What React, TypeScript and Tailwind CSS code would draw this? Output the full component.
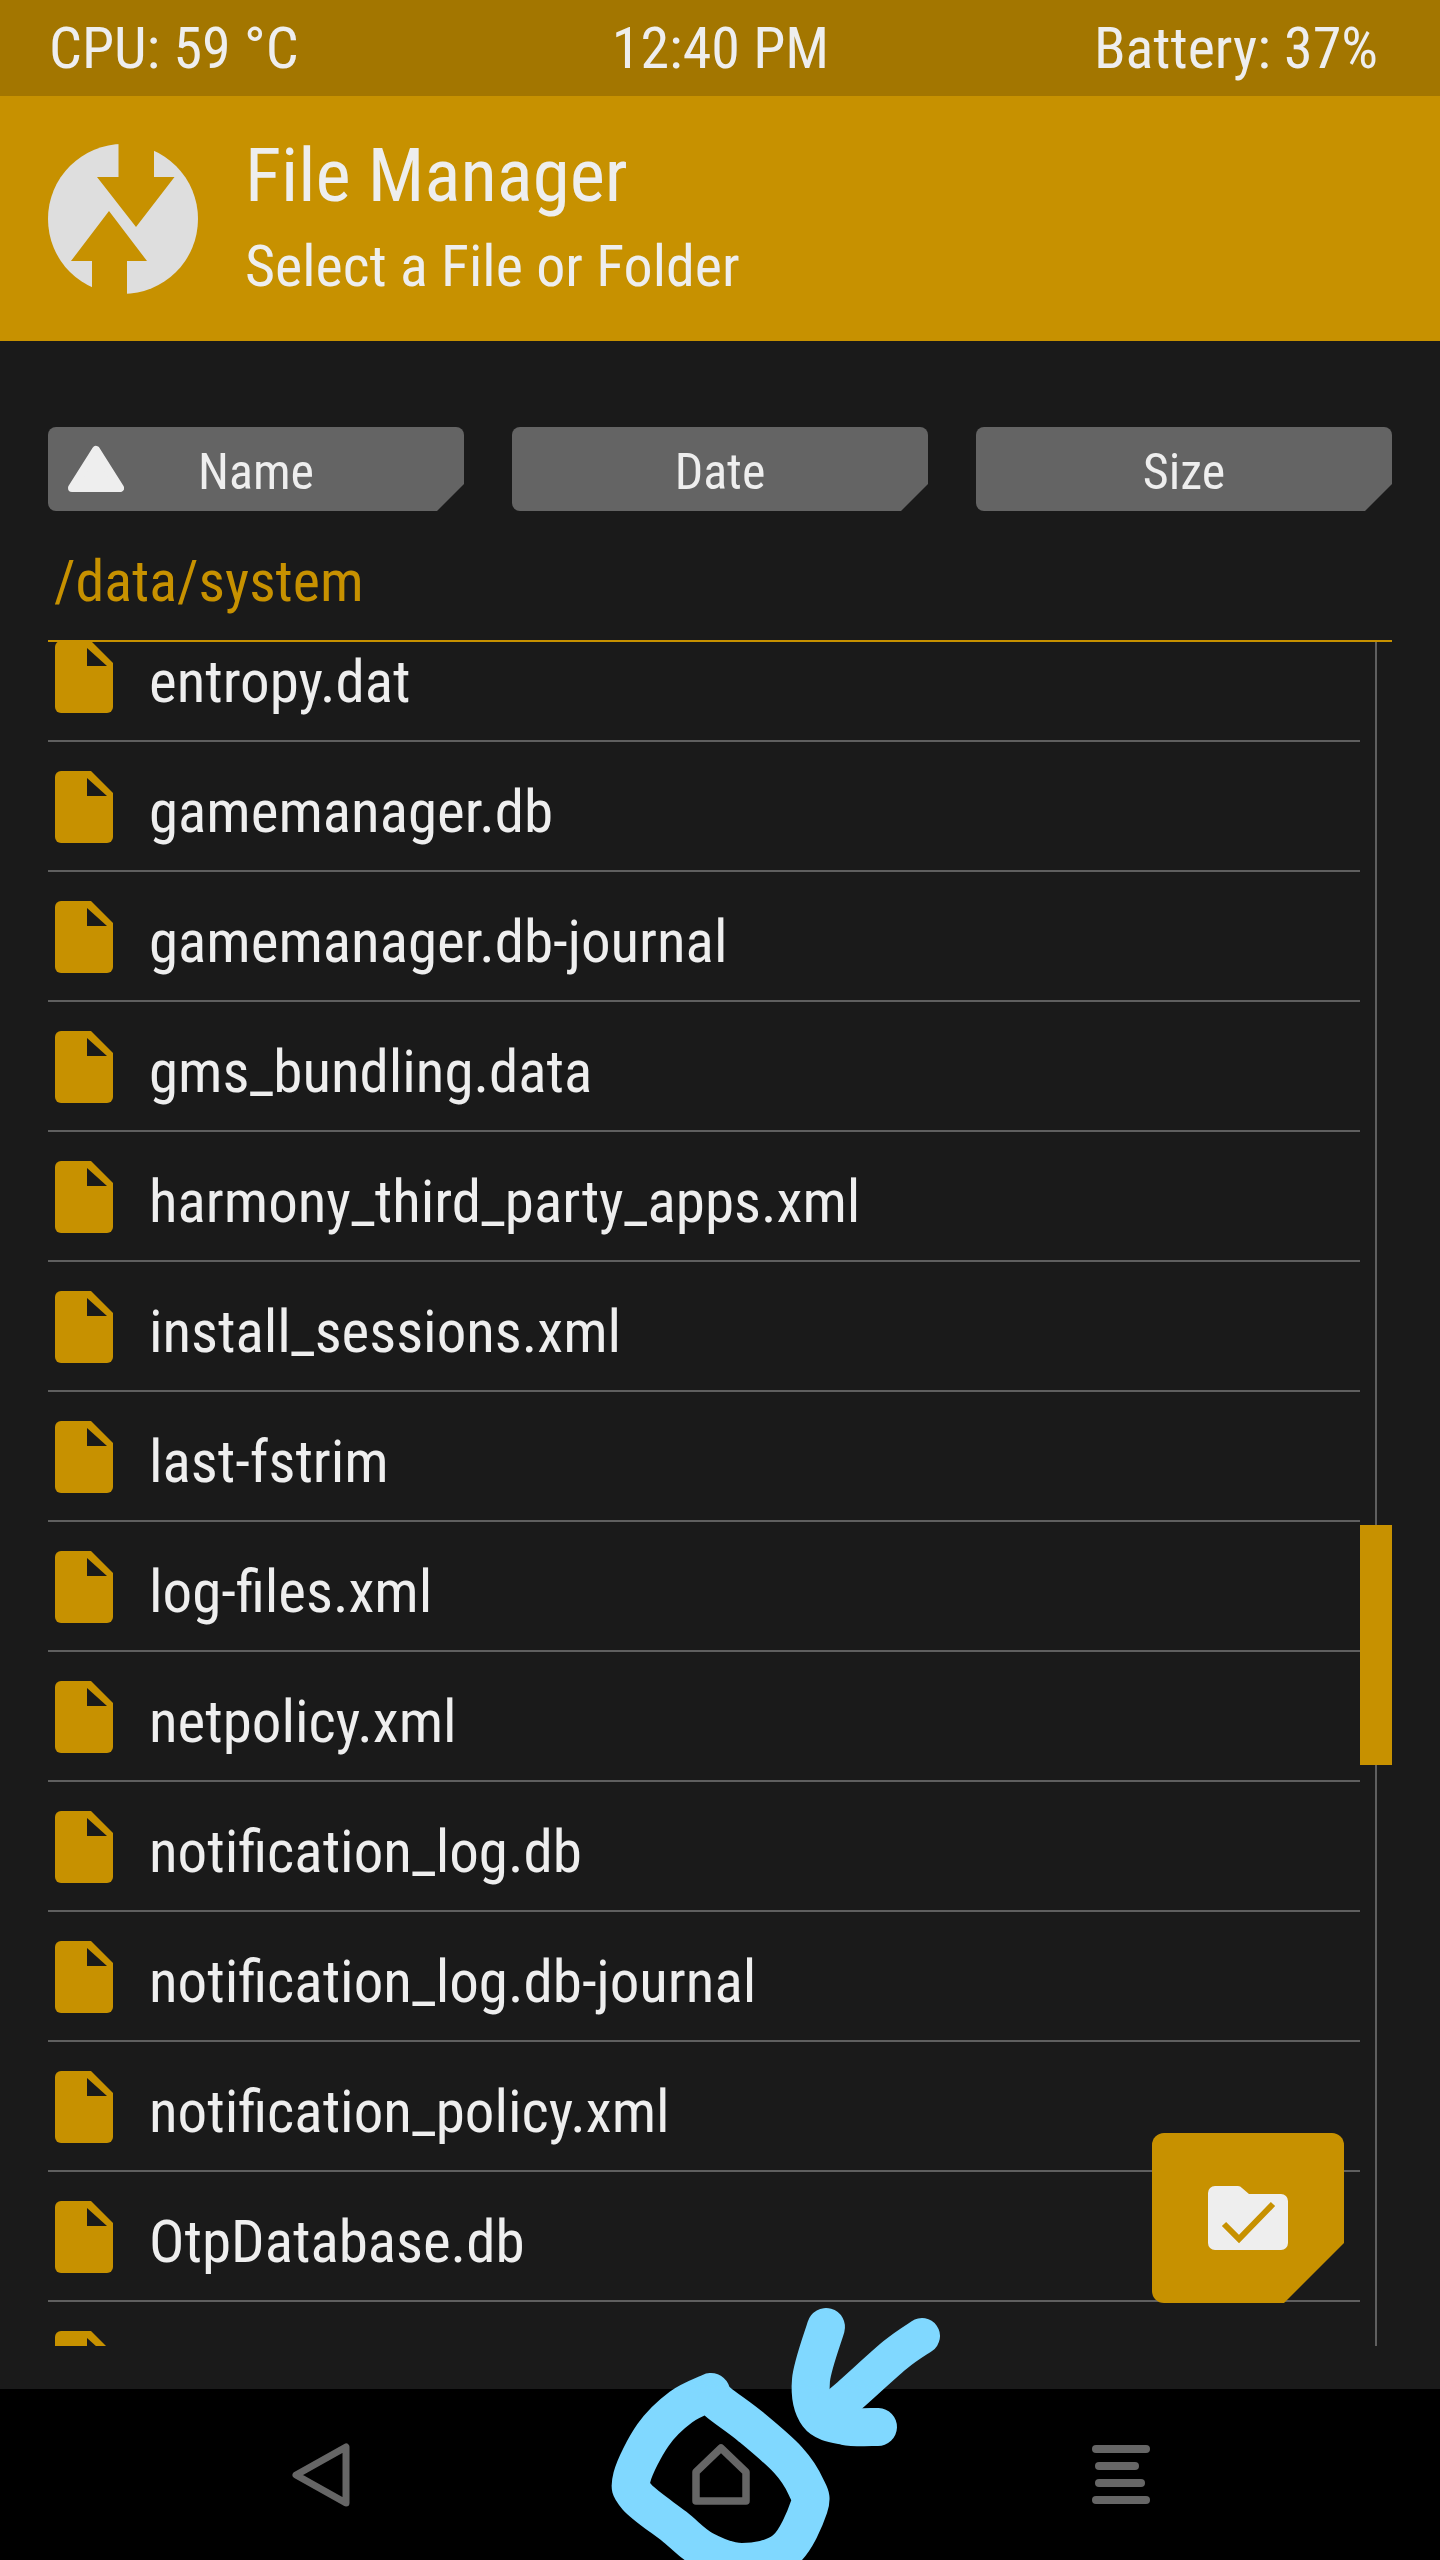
const FILES = [
  "entropy.dat",
  "gamemanager.db",
  "gamemanager.db-journal",
  "gms_bundling.data",
  "harmony_third_party_apps.xml",
  "install_sessions.xml",
  "last-fstrim",
  "log-files.xml",
  "netpolicy.xml",
  "notification_log.db",
  "notification_log.db-journal",
  "notification_policy.xml",
  "OtpDatabase.db",
  "",
];

function Logo() {
  return (
    <svg width="150" height="150" viewBox="0 0 150 150">
      <circle cx="75" cy="75" r="75" fill="#dedede" />
      <path d="M70.5 -5H106V33H126.5L88 83L49 33H70.5Z" fill="#c79100" />
      <path d="M61 67L99 117H79V155H44V117H23Z" fill="#c79100" />
    </svg>
  );
}

function FileIcon() {
  return (
    <svg width="58" height="72" viewBox="0 0 58 72" className="shrink-0">
      <path
        d="M6 0H36L58 22V66a6 6 0 0 1-6 6H6a6 6 0 0 1-6-6V6a6 6 0 0 1 6-6Z"
        fill="#c79100"
      />
      <path d="M32 7V25H52Z" fill="#1a1a1a" />
    </svg>
  );
}

function SortButton({ label, active }: { label: string; active?: boolean }) {
  return (
    <div className="relative flex h-[84px] w-[416px] items-center justify-center rounded-lg bg-[#646464] pt-[6px] text-[50px] text-[#eeeeee] [clip-path:polygon(0_0,100%_0,100%_calc(100%-27px),calc(100%-27px)_100%,0_100%)]">
      {active && (
        <svg width="56" height="48" viewBox="0 0 56 48" className="absolute left-[20px] top-[18px]">
          <path d="M28 5L52 43H4Z" fill="#eeeeee" stroke="#eeeeee" strokeWidth="8" strokeLinejoin="round" />
        </svg>
      )}
      <span>{label}</span>
    </div>
  );
}

// hand-drawn marks over the nav bar, as one smooth line through each point list
function smooth(points: number[][]) {
  let d = `M${points[0][0]} ${points[0][1]}`;
  for (let i = 0; i < points.length - 1; i++) {
    const p0 = points[Math.max(i - 1, 0)];
    const p1 = points[i];
    const p2 = points[i + 1];
    const p3 = points[Math.min(i + 2, points.length - 1)];
    d += ` C${p1[0] + (p2[0] - p0[0]) / 6} ${p1[1] + (p2[1] - p0[1]) / 6} ${p2[0] - (p3[0] - p1[0]) / 6} ${p2[1] - (p3[1] - p1[1]) / 6} ${p2[0]} ${p2[1]}`;
  }
  return d;
}

function Scribble() {
  const loop = [[111, 92], [81, 107], [53, 135], [32, 177], [37, 197], [75, 227], [104, 250], [142, 262], [185, 250], [209, 207], [206, 187], [188, 160], [151, 127], [118, 102], [111, 92]];
  const left = [[226, 27], [211, 80], [218, 115], [245, 126], [278, 127]];
  const right = [[322, 36], [295, 55], [249, 96], [228, 113]];
  return (
    <svg width="360" height="260" viewBox="0 0 360 260" className="absolute left-[600px] top-[2300px]">
      <g fill="none" stroke="#80d8ff" strokeWidth="38" strokeLinecap="round" strokeLinejoin="round">
        <path d={smooth(loop)} />
        <path d={smooth(left)} />
        <path d={smooth(right)} strokeWidth="36" />
      </g>
    </svg>
  );
}

export default function App() {
  return (
    <div className="relative flex h-[2560px] w-[1440px] flex-col overflow-hidden bg-[#1a1a1a] font-['Roboto',sans-serif] [font-stretch:75%]">
      <div className="grid h-[96px] grid-cols-3 items-center bg-[#a37600] pl-[49px] pr-[62px] text-[58px] text-[#eeeeee]">
        <span>CPU: 59 °C</span>
        <span className="pl-[14px] text-center">12:40 PM</span>
        <span className="text-right">Battery: 37%</span>
      </div>

      <div className="flex h-[245px] items-center gap-[47px] bg-[#c79100] pl-[48px]">
        <Logo />
        <div className="flex flex-col gap-[3px] pt-[4px] text-[#eeeeee]">
          <span className="text-[75px] leading-[88px]">File Manager</span>
          <span className="text-[58px] leading-[88px]">Select a File or Folder</span>
        </div>
      </div>

      <div className="flex justify-between px-[48px] pt-[86px]">
        <SortButton label="Name" active />
        <SortButton label="Date" />
        <SortButton label="Size" />
      </div>

      <div className="mx-[48px] flex h-[131px] items-center border-b-2 border-[#c79100] pl-[6px] pt-[12px] text-[58px] text-[#c79100]">
        /data/system
      </div>

      <div className="mx-[48px] flex h-[1704px]">
        <div className="h-full w-[1312px] overflow-hidden">
          <div className="-mt-[30px]">
            {FILES.map((name, i) => (
              <div
                key={i}
                className="flex h-[130px] items-start gap-[36px] border-b-2 border-[#5f5f5f] pl-[7px] pt-[29px] text-[59px] leading-[72px] text-[#eeeeee]"
              >
                <FileIcon />
                <span className="mt-[5px]">{name}</span>
              </div>
            ))}
          </div>
        </div>
        <div className="relative flex h-full w-[32px] justify-center">
          <div className="h-full w-[2px] bg-[#5f5f5f]" />
          <div className="absolute left-0 top-[883px] h-[240px] w-[32px] bg-[#c79100]" />
        </div>
      </div>

      {/* floating select button */}
      <div className="absolute left-[1152px] top-[2133px] flex h-[170px] w-[192px] items-start justify-center rounded-xl bg-[#c79100] pt-[53px] [clip-path:polygon(0_0,100%_0,100%_calc(100%-60px),calc(100%-60px)_100%,0_100%)]">
        <svg width="80" height="64" viewBox="0 0 80 64">
          <path
            d="M7 0H30a6 6 0 0 1 4 2L41 8H73a7 7 0 0 1 7 7V57a7 7 0 0 1-7 7H7a7 7 0 0 1-7-7V7a7 7 0 0 1 7-7Z"
            fill="#eeeeee"
          />
          <path d="M16 38L31 53L65 18" fill="none" stroke="#c79100" strokeWidth="6" />
        </svg>
      </div>

      {/* nav bar */}
      <div className="mt-auto flex h-[171px] items-center gap-[342px] bg-black pl-[292px]">
        <svg width="58" height="64" viewBox="0 0 58 64">
          <path
            d="M54 4V60L4 32Z"
            fill="none"
            stroke="#666666"
            strokeWidth="7"
            strokeLinejoin="round"
          />
        </svg>
        <svg width="58" height="62" viewBox="0 0 58 62">
          <path
            d="M29 4L54 28V57H4V28Z"
            fill="none"
            stroke="#666666"
            strokeWidth="7.5"
            strokeLinejoin="round"
          />
        </svg>
        <div className="flex w-[58px] flex-col items-start gap-[9px]">
          <div className="h-[8px] w-[58px] rounded-full bg-[#666666]" />
          <div className="ml-[3px] h-[8px] w-[44px] rounded-full bg-[#666666]" />
          <div className="ml-[3px] h-[8px] w-[50px] rounded-full bg-[#666666]" />
          <div className="h-[8px] w-[58px] rounded-full bg-[#666666]" />
        </div>
      </div>

      <Scribble />
    </div>
  );
}
